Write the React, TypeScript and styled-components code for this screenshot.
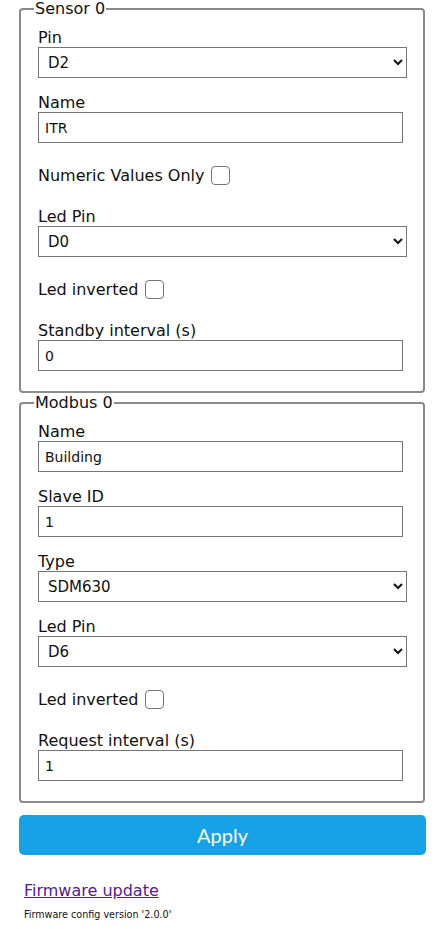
import React from "react";
import styled, { createGlobalStyle } from "styled-components";

const GlobalStyle = createGlobalStyle`
  body {
    margin: 0;
    background: #ffffff;
    font-family: "DejaVu Sans", Verdana, sans-serif;
    color: #111111;
  }
`;

const Page = styled.form`
  width: 407px;
  padding: 1px 0 0 19px;
  display: flex;
  flex-direction: column;
`;

const Group = styled.fieldset`
  margin: 0 0 2px 0;
  width: 406px;
  box-sizing: border-box;
  border: 2px solid #8a8a8a;
  border-radius: 4px;
  padding: 12px 16px 20px 17px;
`;

const Legend = styled.legend`
  font-size: 16px;
  line-height: 16px;
  padding: 0 1px;
  margin-left: -4px;
`;

const Field = styled.div`
  display: flex;
  flex-direction: column;
  margin-bottom: 16px;

  &:last-child {
    margin-bottom: 0;
  }
`;

const Label = styled.label`
  font-size: 16px;
  line-height: 18px;
  height: 18px;
`;

const Select = styled.select`
  width: 100%;
  height: 31px;
  box-sizing: border-box;
  border: 1px solid #767676;
  border-radius: 0;
  background: #ffffff;
  font-family: "DejaVu Sans", Verdana, sans-serif;
  font-size: 15px;
  color: #111111;
  padding: 0 5px;
`;

const Input = styled.input`
  width: calc(100% - 4px);
  height: 31px;
  box-sizing: border-box;
  border: 1px solid #767676;
  border-radius: 0;
  font-family: "DejaVu Sans", Verdana, sans-serif;
  font-size: 14px;
  color: #111111;
  padding: 0 6px;
`;

const CheckRow = styled.label`
  display: flex;
  align-items: center;
  gap: 7px;
  height: 33px;
  font-size: 16px;
  margin-bottom: 16px;
`;

const Check = styled.input`
  appearance: none;
  margin: 0;
  width: 19px;
  height: 19px;
  box-sizing: border-box;
  border: 1.5px solid #767676;
  border-radius: 4px;
  background: #ffffff;
`;

const ApplyButton = styled.button`
  margin-top: 10px;
  width: 407px;
  height: 40px;
  border: 0;
  border-radius: 5px;
  background: #17a2e7;
  color: #ffffff;
  font-family: Lato, "Open Sans", sans-serif;
  font-size: 20px;
`;

const Footer = styled.div`
  padding: 27px 0 0 5px;
  display: flex;
  flex-direction: column;
  gap: 9px;
`;

const Link = styled.a`
  color: #551a8b;
  font-size: 16px;
  line-height: 18px;
  text-decoration: underline;
`;

const Version = styled.div`
  font-size: 9.6px;
  line-height: 11px;
  color: #111111;
`;

const TextField = ({ label, value }: { label: string; value: string }) => (
  <Field>
    <Label>{label}</Label>
    <Input defaultValue={value} />
  </Field>
);

const SelectField = ({
  label,
  value,
  options,
}: {
  label: string;
  value: string;
  options: string[];
}) => (
  <Field>
    <Label>{label}</Label>
    <Select defaultValue={value}>
      {options.map((o) => (
        <option key={o}>{o}</option>
      ))}
    </Select>
  </Field>
);

const pins = ["D0", "D1", "D2", "D3", "D4", "D5", "D6", "D7", "D8"];

export default function App() {
  return (
    <>
      <GlobalStyle />
      <Page onSubmit={(e) => e.preventDefault()}>
        <Group>
          <Legend>Sensor 0</Legend>
          <SelectField label="Pin" value="D2" options={pins} />
          <TextField label="Name" value="ITR" />
          <CheckRow>
            Numeric Values Only <Check type="checkbox" />
          </CheckRow>
          <SelectField label="Led Pin" value="D0" options={pins} />
          <CheckRow>
            Led inverted <Check type="checkbox" />
          </CheckRow>
          <TextField label="Standby interval (s)" value="0" />
        </Group>
        <Group>
          <Legend>Modbus 0</Legend>
          <TextField label="Name" value="Building" />
          <TextField label="Slave ID" value="1" />
          <SelectField label="Type" value="SDM630" options={["SDM120", "SDM630"]} />
          <SelectField label="Led Pin" value="D6" options={pins} />
          <CheckRow>
            Led inverted <Check type="checkbox" />
          </CheckRow>
          <TextField label="Request interval (s)" value="1" />
        </Group>
        <ApplyButton type="submit">Apply</ApplyButton>
        <Footer>
          <Link href="#update">Firmware update</Link>
          <Version>Firmware config version '2.0.0'</Version>
        </Footer>
      </Page>
    </>
  );
}
